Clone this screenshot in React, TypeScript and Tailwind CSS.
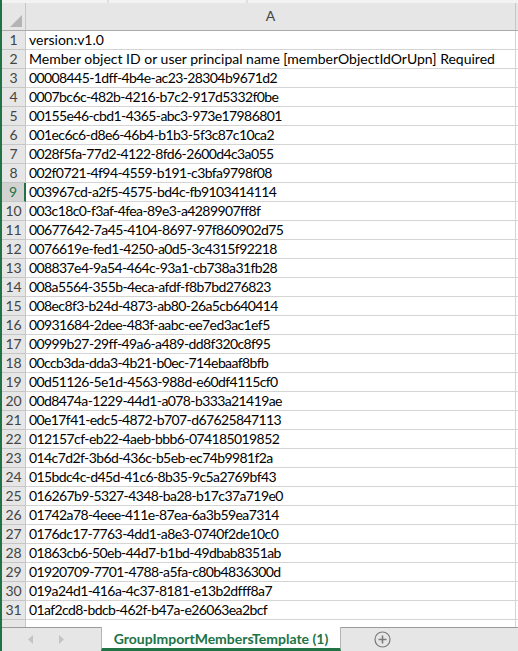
const rows = [
  "version:v1.0",
  "Member object ID or user principal name [memberObjectIdOrUpn] Required",
  "00008445-1dff-4b4e-ac23-28304b9671d2",
  "0007bc6c-482b-4216-b7c2-917d5332f0be",
  "00155e46-cbd1-4365-abc3-973e17986801",
  "001ec6c6-d8e6-46b4-b1b3-5f3c87c10ca2",
  "0028f5fa-77d2-4122-8fd6-2600d4c3a055",
  "002f0721-4f94-4559-b191-c3bfa9798f08",
  "003967cd-a2f5-4575-bd4c-fb9103414114",
  "003c18c0-f3af-4fea-89e3-a4289907ff8f",
  "00677642-7a45-4104-8697-97f860902d75",
  "0076619e-fed1-4250-a0d5-3c4315f92218",
  "008837e4-9a54-464c-93a1-cb738a31fb28",
  "008a5564-355b-4eca-afdf-f8b7bd276823",
  "008ec8f3-b24d-4873-ab80-26a5cb640414",
  "00931684-2dee-483f-aabc-ee7ed3ac1ef5",
  "00999b27-29ff-49a6-a489-dd8f320c8f95",
  "00ccb3da-dda3-4b21-b0ec-714ebaaf8bfb",
  "00d51126-5e1d-4563-988d-e60df4115cf0",
  "00d8474a-1229-44d1-a078-b333a21419ae",
  "00e17f41-edc5-4872-b707-d67625847113",
  "012157cf-eb22-4aeb-bbb6-074185019852",
  "014c7d2f-3b6d-436c-b5eb-ec74b9981f2a",
  "015bdc4c-d45d-41c6-8b35-9c5a2769bf43",
  "016267b9-5327-4348-ba28-b17c37a719e0",
  "01742a78-4eee-411e-87ea-6a3b59ea7314",
  "0176dc17-7763-4dd1-a8e3-0740f2de10c0",
  "01863cb6-50eb-44d7-b1bd-49dbab8351ab",
  "01920709-7701-4788-a5fa-c80b4836300d",
  "019a24d1-416a-4c37-8181-e13b2dfff8a7",
  "01af2cd8-bdcb-462f-b47a-e26063ea2bcf",
];

const font = { fontFamily: "Lato, 'Open Sans', sans-serif" };

function Row({ n, text }: { n: number; text: string }) {
  const active = n === 9;
  const isId = n > 2;
  return (
    <div className="flex h-[19px] shrink-0">
      <div
        className={
          active
            ? "w-[24px] shrink-0 border-b border-r-2 border-b-[#c6c6c6] border-r-[#217346] bg-[#d2d2d2] text-center text-[14px] leading-[18px] text-[#217346]"
            : "w-[24px] shrink-0 border-b border-r border-[#c6c6c6] bg-[#e6e6e6] text-center text-[14px] leading-[18px] text-[#444]"
        }
      >
        {n}
      </div>
      <div
        className={
          isId
            ? "w-[490px] shrink-0 whitespace-nowrap border-b border-r border-[#d4d4d4] pl-[3px] text-[14px] leading-[18px] tracking-[-0.6px] text-black"
            : "w-[490px] shrink-0 whitespace-nowrap border-b border-r border-[#d4d4d4] pl-[3px] text-[14px] leading-[18px] text-black"
        }
      >
        {text}
      </div>
      <div className="flex-1 border-b border-[#d4d4d4]" />
    </div>
  );
}

export default function App() {
  return (
    <div
      className="flex h-[651px] w-[518px] flex-col overflow-hidden border-l-2 border-[#217346] bg-white"
      style={font}
    >
      {/* strip under the formula bar */}
      <div className="flex h-[3px] shrink-0 bg-[#f3f3f3]">
        <div className="w-[107px] border-r-2 border-[#e0e0e0]" />
        <div className="w-[139px] border-r-2 border-[#e0e0e0]" />
        <div className="flex-1" />
      </div>

      {/* column headers */}
      <div className="flex h-[28px] shrink-0 border-b border-[#ababab] bg-[#e6e6e6]">
        <div className="relative w-[24px] shrink-0 border-r border-[#c6c6c6]">
          <div className="absolute bottom-[3px] right-[3px] h-0 w-0 border-b-[12px] border-l-[12px] border-b-[#b4b4b4] border-l-transparent" />
        </div>
        <div className="flex w-[490px] shrink-0 items-end justify-center border-r border-[#c6c6c6] pb-[4px] text-[14px] text-[#444]">
          A
        </div>
        <div className="flex-1" />
      </div>

      {rows.map((text, i) => (
        <Row key={i} n={i + 1} text={text} />
      ))}

      {/* partial row 32 */}
      <div className="flex h-[7px] shrink-0">
        <div className="w-[24px] shrink-0 border-r border-[#c6c6c6] bg-[#e6e6e6]" />
        <div className="w-[490px] shrink-0 border-r border-[#d4d4d4]" />
        <div className="flex-1" />
      </div>

      {/* sheet tabs */}
      <div className="flex h-[24px] shrink-0 items-stretch border-t border-[#9a9a9a] bg-[#e6e6e6]">
        <div className="flex w-[99px] items-center gap-[24px] pl-[26px]">
          <svg width="6" height="9" viewBox="0 0 6 9">
            <path d="M5 0 L0 4.5 L5 9 Z" fill="#c4c4c4" />
          </svg>
          <svg width="6" height="9" viewBox="0 0 6 9">
            <path d="M1 0 L6 4.5 L1 9 Z" fill="#c4c4c4" />
          </svg>
        </div>
        <div className="-mt-px flex w-[240px] items-center justify-center border-x border-b-[3px] border-x-[#b4b4b4] border-b-[#217346] bg-white pt-[2px] text-[14px] font-bold text-[#217346]">
          GroupImportMembersTemplate (1)
        </div>
        <div className="flex flex-1 items-center pl-[33px]">
          <svg width="17" height="17" viewBox="0 0 17 17">
            <circle cx="8.5" cy="8.5" r="7.5" fill="none" stroke="#7a7a7a" strokeWidth="1.2" />
            <path d="M8.5 4.5 V12.5 M4.5 8.5 H12.5" stroke="#7a7a7a" strokeWidth="1.6" />
          </svg>
        </div>
      </div>
    </div>
  );
}
